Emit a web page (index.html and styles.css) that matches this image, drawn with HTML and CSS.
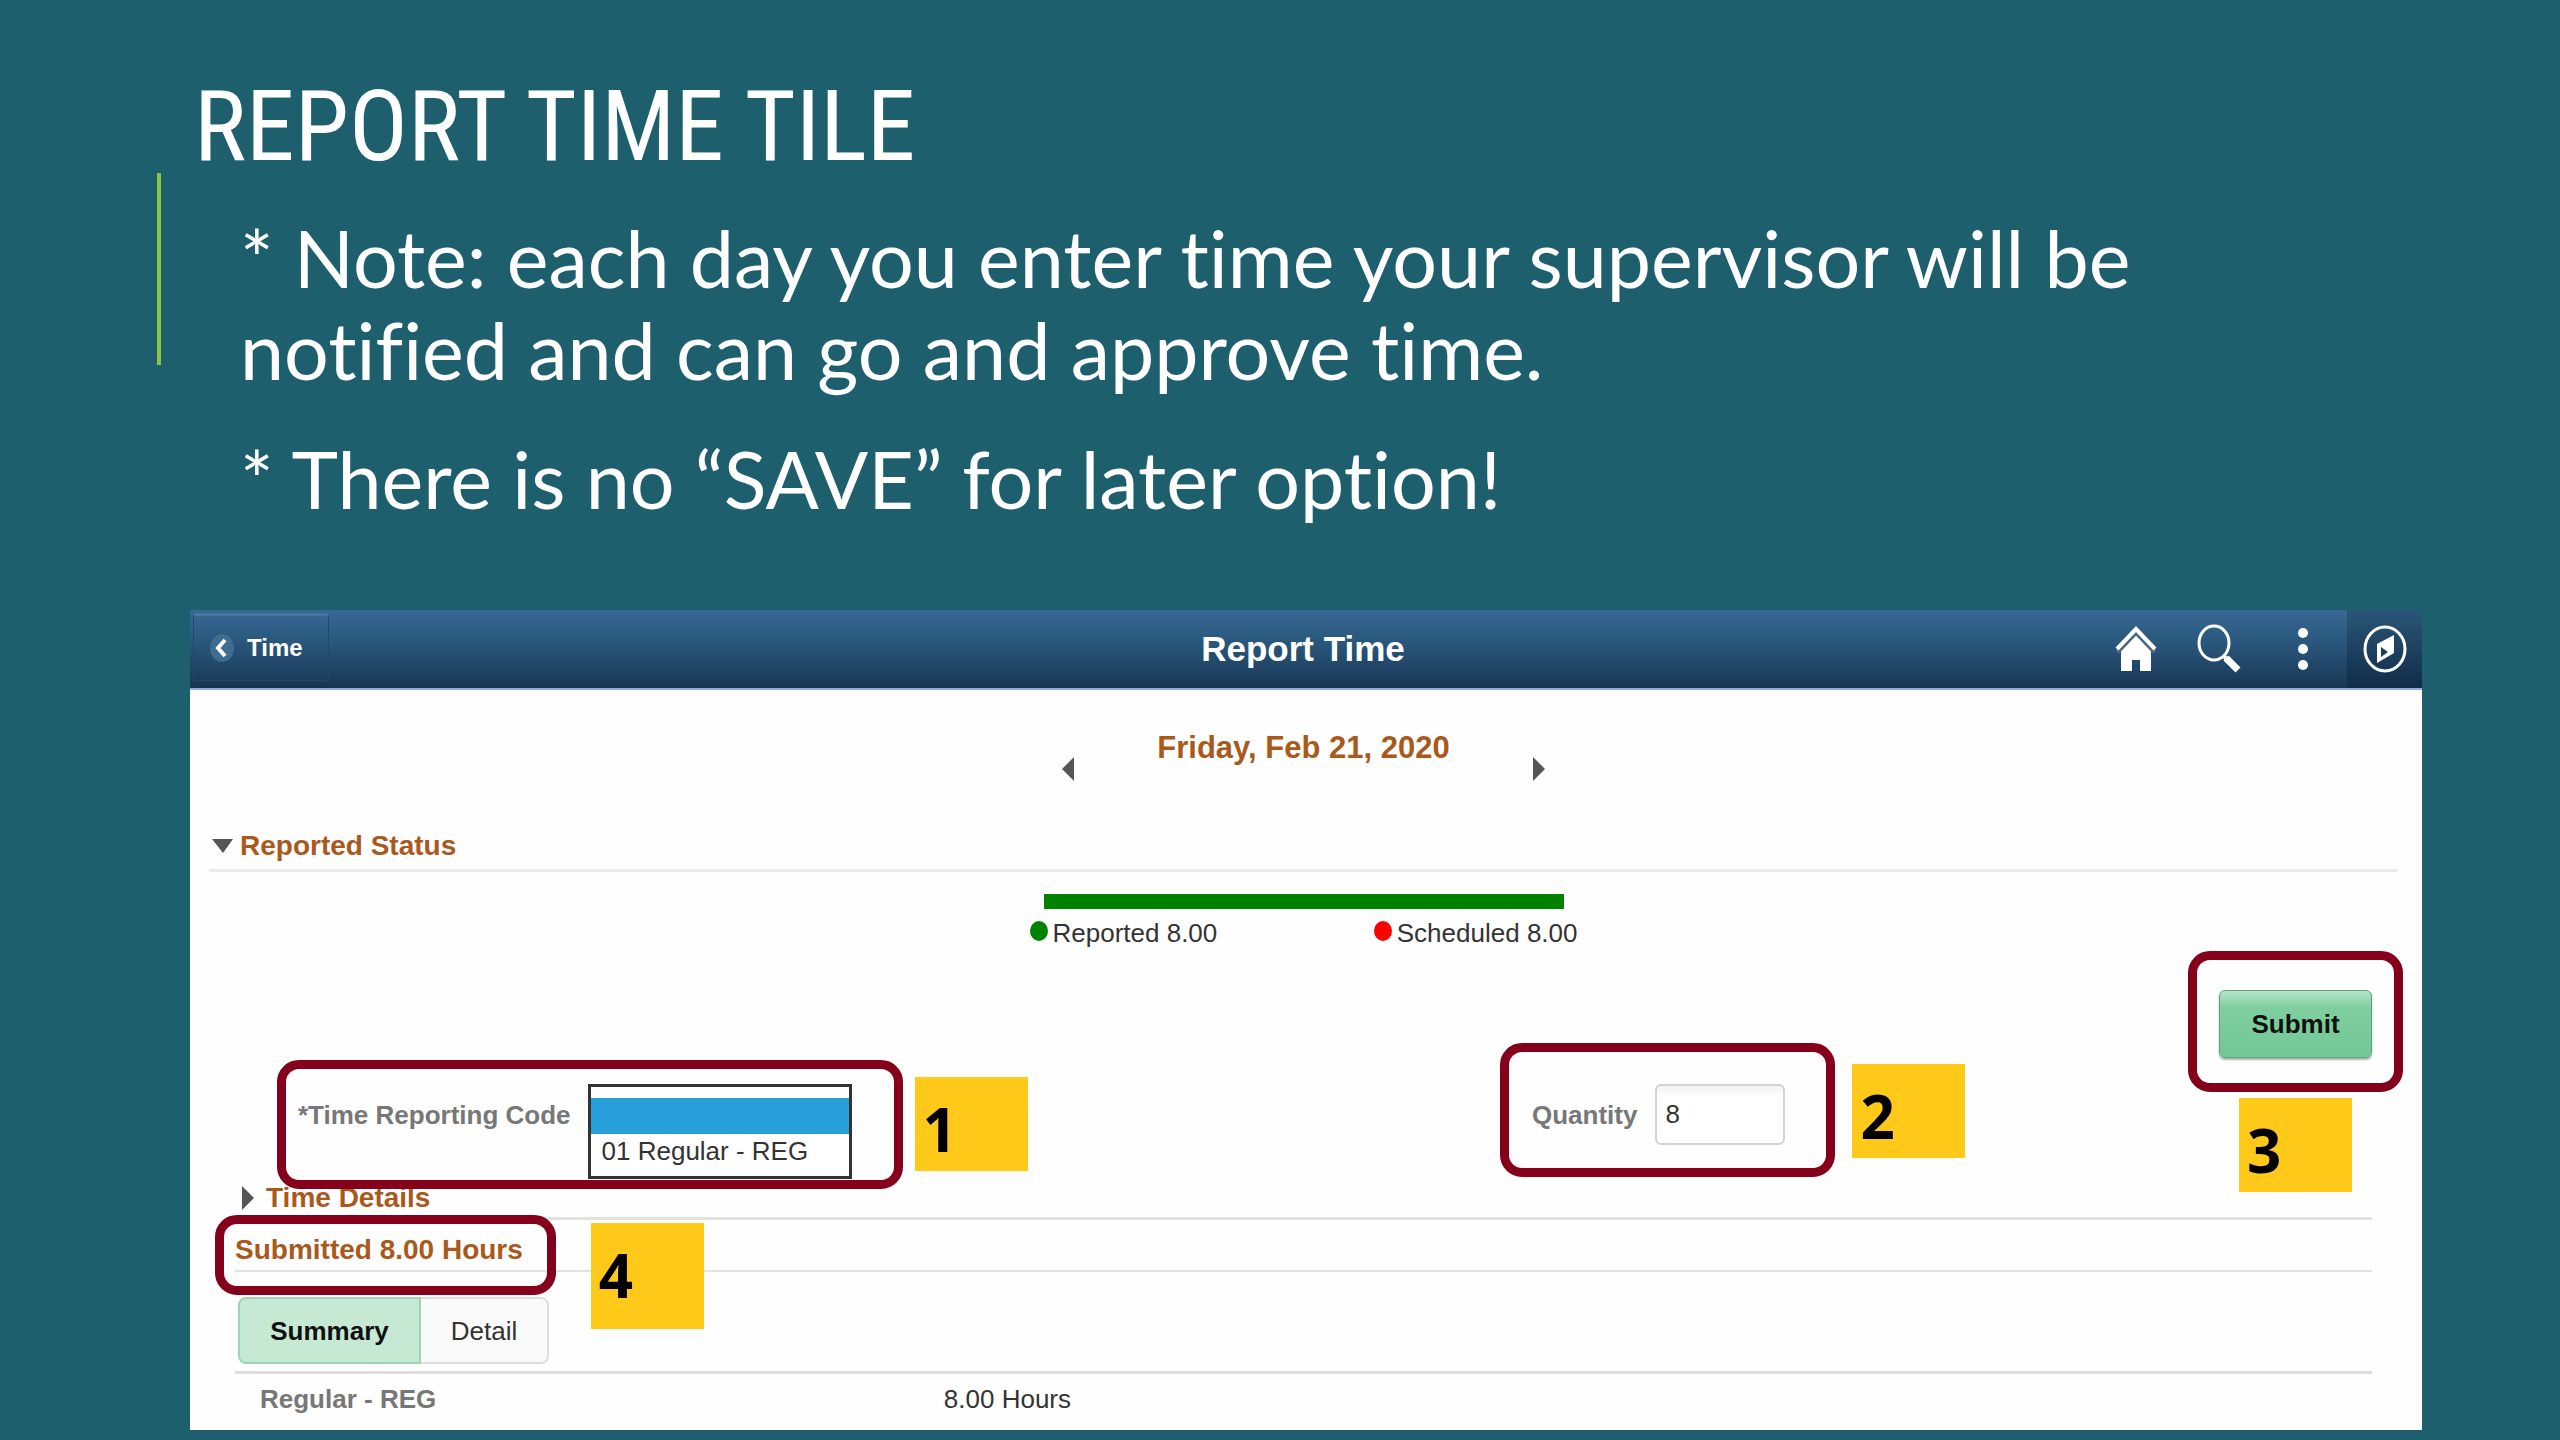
FILE: index.html
```html
<!DOCTYPE html>
<html lang="en">
<head>
<meta charset="utf-8">
<title>Report Time Tile</title>
<link rel="stylesheet" href="styles.css">
</head>
<body>
<header class="intro">
  <div class="intro-rule"></div>
  <div class="intro-text">
    <h1>REPORT TIME TILE</h1>
    <div class="notes">
      <p>* Note: each day you enter time your supervisor will be<br>notified and can go and approve time.</p>
      <p>* There is no “SAVE” for later option!</p>
    </div>
  </div>
</header>

<main class="card">
  <div class="bar">
    <button class="back" type="button">
      <svg width="24" height="28" viewBox="0 0 24 28" aria-hidden="true"><ellipse cx="12" cy="14" rx="12" ry="14" fill="#3d6c8e"/><path d="M15 6 L8 14 L15 22" fill="none" stroke="#fff" stroke-width="4"/></svg>
      Time
    </button>
    <h2>Report Time</h2>
    <div class="tools">
      <button type="button" aria-label="Home"><svg width="42" height="48" viewBox="0 0 42 48"><path d="M6 25 L21 10 L36 25 V46 H25 V35 H17 V46 H6 Z" fill="#fff"/><path d="M2 27 L21 7 L40 27" fill="none" stroke="#4b6680" stroke-width="5"/><path d="M2 24 L21 4 L40 24" fill="none" stroke="#fff" stroke-width="4"/></svg></button>
      <button type="button" aria-label="Search"><svg width="46" height="50" viewBox="0 0 46 50"><ellipse cx="18" cy="19" rx="15" ry="17" fill="none" stroke="#fff" stroke-width="3"/><path d="M28 32 L31 36" stroke="#fff" stroke-width="4"/><path d="M30 34 L42 46" stroke="#fff" stroke-width="7"/></svg></button>
      <button type="button" aria-label="Actions"><svg width="12" height="46" viewBox="0 0 12 46"><g fill="#fff"><circle cx="6" cy="7" r="5"/><circle cx="6" cy="23" r="5"/><circle cx="6" cy="39" r="5"/></g></svg></button>
      <button class="nav" type="button" aria-label="Navigation"><svg width="46" height="50" viewBox="0 0 46 50"><ellipse cx="23" cy="25" rx="20" ry="22" fill="none" stroke="#fff" stroke-width="3"/><path fill-rule="evenodd" d="M32 11 V29 L15 39 V20 Z M19 23 V33 L26 28 Z" fill="#fff"/></svg></button>
    </div>
  </div>

  <div class="content">
    <div class="date-nav">
      <button type="button" aria-label="Previous day"><svg width="12" height="24" viewBox="0 0 12 24"><path d="M12 0 V24 L0 12 Z" fill="#555"/></svg></button>
      <span class="date">Friday, Feb 21, 2020</span>
      <button type="button" aria-label="Next day"><svg width="12" height="24" viewBox="0 0 12 24"><path d="M0 0 V24 L12 12 Z" fill="#555"/></svg></button>
    </div>

    <h3 class="section status-head"><svg width="21" height="14" viewBox="0 0 21 14" aria-hidden="true"><path d="M0 0 H21 L11 14 Z" fill="#555"/></svg>Reported Status</h3>

    <div class="status">
      <div class="meter"></div>
      <div class="legend">
        <span><i class="dot reported"></i>Reported 8.00</span>
        <span><i class="dot scheduled"></i>Scheduled 8.00</span>
      </div>
    </div>

    <form class="inner">
      <div class="actions">
        <div class="marked submit-mark">
          <button class="submit" type="button">Submit</button>
          <div class="frame"></div>
          <div class="step">3</div>
        </div>
      </div>
      <div class="fields">
        <div>
          <div class="marked code-mark">
            <label for="code">*Time Reporting Code</label>
            <select id="code" size="2"><option selected>&nbsp;</option><option>01 Regular - REG</option></select>
            <div class="frame"></div>
            <div class="step">1</div>
          </div>
        </div>
        <div>
          <div class="marked quantity-mark">
            <label for="quantity">Quantity</label>
            <input id="quantity" type="text" value="8">
            <div class="frame"></div>
            <div class="step">2</div>
          </div>
        </div>
      </div>

      <h3 class="section details-head"><svg width="12" height="24" viewBox="0 0 12 24" aria-hidden="true"><path d="M0 0 V24 L12 12 Z" fill="#555"/></svg>Time Details</h3>

      <h3 class="section submitted-head"><span class="marked submitted-mark">Submitted 8.00 Hours<span class="frame"></span><span class="step">4</span></span></h3>

      <div class="tabs">
        <button class="active" type="button">Summary</button><button type="button">Detail</button>
      </div>

      <table>
        <tr><th scope="row">Regular - REG</th><td>8.00 Hours</td></tr>
      </table>
    </form>
  </div>
</main>
</body>
</html>
```
FILE: styles.css
```css
* { box-sizing: border-box; }

body {
  margin: 0;
  min-height: 100vh;
  padding-bottom: 10px;
  background: #1e5f6e;
  font-family: "Liberation Sans", Arial, sans-serif;
  font-size: 26px;
  line-height: 30px;
  color: #333;
}

button {
  padding: 0;
  border: 0;
  background: none;
  font: inherit;
  color: inherit;
}

svg { display: block; }
h1, h2, h3, p { margin: 0; }

/* Slide heading and notes */
.intro {
  display: flex;
  gap: 33px;
  min-height: 610px;
  padding-left: 157px;
  color: #fff;
}

.intro-rule {
  width: 4px;
  height: 192px;
  margin-top: 173px;
  background: #8cc63f;
}

h1 {
  padding-top: 72px;
  font-family: "Roboto Condensed", "Open Sans Condensed", "Noto Sans CJK SC", sans-serif;
  font-size: 98px;
  font-weight: 400;
  line-height: 110px;
}

.notes {
  display: grid;
  gap: 37px;
  padding: 30px 0 0 46px;
  font-family: Lato, sans-serif;
  font-size: 79px;
  line-height: 92px;
  font-variant-ligatures: none;
}

/* Application window */
.card {
  margin: 0 138px 0 190px;
  background: #fefefe;
}

.bar {
  display: grid;
  grid-template-columns: 1fr auto 1fr;
  height: 80px;
  border-bottom: 2px solid #8fabd8;
  background: linear-gradient(#386894, #2b5a80 35%, #1d3f60 85%, #18354f);
  color: #fff;
}

.back {
  display: flex;
  align-items: center;
  gap: 13px;
  justify-self: start;
  height: 68px;
  margin: 3px;
  padding: 0 25px 0 16px;
  border: 1px solid #23476a;
  border-top: 3px solid #47779c;
  border-radius: 4px;
  font-size: 24px;
  font-weight: 700;
}

h2 {
  align-self: center;
  padding-right: 6px;
  font-size: 35px;
  line-height: 40px;
}

.tools {
  display: flex;
  align-items: center;
  justify-content: flex-end;
}

.tools button { margin-right: 39px; }
.tools button:nth-child(2) { margin-right: 55px; }
.tools button:nth-child(3) { margin-right: 38px; }

.tools .nav {
  display: grid;
  place-items: center;
  width: 75px;
  height: 78px;
  margin: 0;
  background: linear-gradient(#2b5678, #102c49);
}

.content { padding: 40px 24px 16px 19px; }

.date-nav {
  display: flex;
  justify-content: center;
  gap: 83px;
}

.date-nav button {
  height: 24px;
  margin-top: 27px;
}

.date {
  font-size: 31px;
  font-weight: 700;
  line-height: 36px;
  color: #a9591c;
}

.section {
  display: flex;
  align-items: center;
  font-size: 28px;
  line-height: 32px;
  color: #a9591c;
  border-bottom: 3px solid #e2e2e2;
}

.status-head {
  gap: 7px;
  margin-top: 49px;
  padding: 0 0 7px 3px;
  border-color: #ececec;
}

.status {
  width: 548px;
  margin: 22px auto 0;
}

.meter {
  height: 15px;
  margin: 0 14px 9px;
  background: #008200;
}

.legend {
  display: flex;
  justify-content: space-between;
}

.legend span {
  display: flex;
  gap: 5px;
}

.dot {
  width: 18px;
  height: 20px;
  margin-top: 3px;
  border-radius: 50%;
}

.reported { background: #008200; }
.scheduled { background: #f00; }

.inner { padding: 42px 26px 0; }

.actions {
  display: flex;
  justify-content: flex-end;
}

.submit {
  display: block;
  width: 153px;
  height: 68px;
  border: 1px solid #5fa480;
  border-radius: 6px;
  background: linear-gradient(#b4e4ca, #80ce9f 25%, #72c896);
  box-shadow: 0 2px 2px #a5b5ab;
  font-weight: 700;
  color: #111;
}

.fields {
  display: grid;
  grid-template-columns: 1234fr 840fr;
  height: 95px;
  margin-top: 26px;
  padding-left: 63px;
}

.fields label {
  margin-top: 16px;
  font-weight: 700;
  color: #777;
}

select, input {
  font: inherit;
  color: #333;
  outline: 0;
}

select {
  width: 264px;
  height: 95px;
  padding: 11px 0 0;
  border: 3px solid #333;
  border-radius: 0;
  background: #fff;
  overflow: hidden;
}

option {
  height: 36px;
  padding: 2px 11px;
}

option:checked { background: linear-gradient(#269fda, #269fda); }

input {
  width: 130px;
  height: 61px;
  padding: 0 8px;
  border: 2px solid #d2d2d2;
  border-radius: 6px;
  background: linear-gradient(#f2f2f2, #fff 20%);
}

.details-head {
  gap: 12px;
  margin-top: 3px;
  padding: 0 0 3px 7px;
}

.submitted-head {
  margin-top: 14px;
  padding-bottom: 4px;
  border-bottom-width: 2px;
}

.tabs {
  display: flex;
  height: 67px;
  margin: 25px 3px 7px;
}

.tabs button {
  width: 128px;
  border: 2px solid #ddd;
  border-left: 0;
  border-radius: 0 8px 8px 0;
  background: #fafafa;
}

.tabs .active {
  width: 183px;
  border: 2px solid #9bd5b5;
  border-radius: 8px 0 0 8px;
  background: #c6e9d4;
  font-weight: 700;
  color: #111;
}

table {
  width: 100%;
  border-collapse: collapse;
  border-top: 3px solid #ddd;
}

th, td {
  padding: 10px 0 0 25px;
  text-align: left;
}

th {
  width: 32%;
  color: #777;
}

/* Numbered call-outs laid over the controls they point at */
.marked {
  position: relative;
  display: inline-flex;
  align-items: flex-start;
}

.frame {
  position: absolute;
  border: 9px solid #85001a;
  border-radius: 22px;
  pointer-events: none;
}

.step {
  position: absolute;
  width: 113px;
  height: 94px;
  padding: 17px 0 0 8px;
  background: #ffc91a;
  font: 700 60px/70px "Open Sans", sans-serif;
  color: #000;
}

.code-mark { gap: 17px; }
.code-mark .frame { inset: -24px -51px -10px -21px; }
.code-mark .step { top: -7px; right: -176px; }

.quantity-mark { gap: 18px; }
.quantity-mark .frame { inset: -41px -50px -32px -32px; }
.quantity-mark .step { top: -20px; right: -180px; }

.submit-mark .frame { inset: -39px -31px -34px -31px; }
.submit-mark .step { top: 108px; right: 20px; }

.submitted-mark .frame { inset: -19px -33px -29px -20px; }
.submitted-mark .step { top: -11px; right: -181px; height: 106px; }
```
